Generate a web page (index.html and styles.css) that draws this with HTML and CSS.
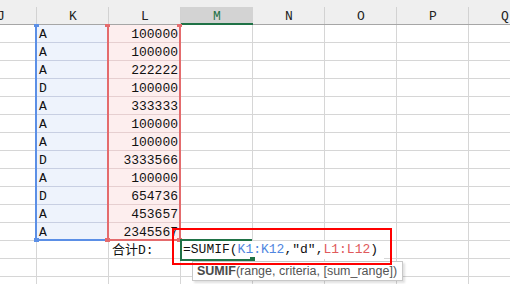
FILE: index.html
```html
<!DOCTYPE html>
<html>
<head>
<meta charset="utf-8">
<link rel="stylesheet" href="styles.css">
</head>
<body>
<div class="sheet">
  <div class="grid">
    <div class="h">J</div><div class="h">K</div><div class="h">L</div><div class="h hs">M</div><div class="h">N</div><div class="h">O</div><div class="h">P</div><div class="h">Q</div>

    <div class="c"></div><div class="c k">A</div><div class="c l">100000</div><div class="c"></div><div class="c"></div><div class="c"></div><div class="c"></div><div class="c"></div>
    <div class="c"></div><div class="c k">A</div><div class="c l">100000</div><div class="c"></div><div class="c"></div><div class="c"></div><div class="c"></div><div class="c"></div>
    <div class="c"></div><div class="c k">A</div><div class="c l">222222</div><div class="c"></div><div class="c"></div><div class="c"></div><div class="c"></div><div class="c"></div>
    <div class="c"></div><div class="c k">D</div><div class="c l">100000</div><div class="c"></div><div class="c"></div><div class="c"></div><div class="c"></div><div class="c"></div>
    <div class="c"></div><div class="c k">A</div><div class="c l">333333</div><div class="c"></div><div class="c"></div><div class="c"></div><div class="c"></div><div class="c"></div>
    <div class="c"></div><div class="c k">A</div><div class="c l">100000</div><div class="c"></div><div class="c"></div><div class="c"></div><div class="c"></div><div class="c"></div>
    <div class="c"></div><div class="c k">A</div><div class="c l">100000</div><div class="c"></div><div class="c"></div><div class="c"></div><div class="c"></div><div class="c"></div>
    <div class="c"></div><div class="c k">D</div><div class="c l">3333566</div><div class="c"></div><div class="c"></div><div class="c"></div><div class="c"></div><div class="c"></div>
    <div class="c"></div><div class="c k">A</div><div class="c l">100000</div><div class="c"></div><div class="c"></div><div class="c"></div><div class="c"></div><div class="c"></div>
    <div class="c"></div><div class="c k">D</div><div class="c l">654736</div><div class="c"></div><div class="c"></div><div class="c"></div><div class="c"></div><div class="c"></div>
    <div class="c"></div><div class="c k">A</div><div class="c l">453657</div><div class="c"></div><div class="c"></div><div class="c"></div><div class="c"></div><div class="c"></div>
    <div class="c"></div><div class="c k">A</div><div class="c l">2345567</div><div class="c"></div><div class="c"></div><div class="c"></div><div class="c"></div><div class="c"></div>

    <div class="c"></div><div class="c"></div><div class="c total">合计D:</div><div class="c"></div><div class="c"></div><div class="c"></div><div class="c"></div><div class="c"></div>
    <div class="c"></div><div class="c"></div><div class="c"></div><div class="c"></div><div class="c"></div><div class="c"></div><div class="c"></div><div class="c"></div>
    <div class="c"></div><div class="c"></div><div class="c"></div><div class="c"></div><div class="c"></div><div class="c"></div><div class="c"></div><div class="c"></div>
  </div>

  <div class="range range-k"></div>
  <div class="range range-l"></div>
  <div class="handle hb ht1"></div>
  <div class="handle hb hb1"></div>
  <div class="handle hr ht2"></div>
  <div class="handle hr ht3"></div>
  <div class="handle hr hb2"></div>
  <div class="handle hr hb3"></div>

  <div class="editor"></div>
  <div class="formula">=SUMIF(<span class="ref-k">K1:K12</span>,"d",<span class="ref-l">L1:L12</span>)</div>
  <div class="handle hg"></div>

  <div class="tip"><b>SUMIF</b>(range, criteria, [sum_range])</div>
  <div class="redbox"></div>
</div>
</body>
</html>
```

FILE: styles.css
```css
* { box-sizing: border-box; }
html, body { margin: 0; padding: 0; background: #fff; overflow: hidden; }

.sheet {
  position: relative;
  width: 510px;
  height: 284px;
  overflow: hidden;
}

.grid {
  display: grid;
  grid-template-columns: repeat(8, 72px);
  grid-template-rows: 25px repeat(15, 18px);
  margin-left: -35px;
  width: 576px;
  font-family: "Liberation Mono", "Noto Sans CJK SC", monospace;
  font-size: 13px;
  color: #111;
}

.h {
  background: linear-gradient(#d2d2d2, #d2d2d2) right bottom / 1px 17px no-repeat, #efefef;
  border-bottom: 1px solid #a6a6a6;
  text-align: center;
  line-height: 15px;
  padding-top: 9px;
  color: #222;
}
.h.hs {
  background: linear-gradient(to bottom, #efefef 7px, #d3d3d3 7px);
  border-bottom: 2px solid #1f7246;
  color: #1f7246;
}

.c {
  border-right: 1px solid #d6d6d6;
  border-bottom: 1px solid #d6d6d6;
  line-height: 16px;
  padding: 2px 2px 0 1px;
  white-space: nowrap;
}
.c.k {
  background: #eef3fc;
  border-bottom-color: #c8cfe2;
  padding-left: 2px;
}
.c.l {
  background: #fdeeee;
  border-bottom-color: #e6cfd0;
  text-align: right;
}
.c.total {
  padding-left: 3px;
  overflow: visible;
}

.range { position: absolute; top: 25px; height: 216px; }
.range-k {
  left: 35px;
  width: 73px;
  border-left: 2px solid #5b8fe6;
  border-bottom: 2px solid #5b8fe6;
}
.range-l {
  left: 107px;
  width: 74px;
  border: 2px solid #e46b6d;
  border-top: none;
}

.handle { position: absolute; width: 5px; height: 4px; }
.hb { background: #5b8fe6; }
.hr { background: #e46b6d; }
.ht1 { left: 34px; top: 24px; height: 3px; }
.hb1 { left: 34px; top: 238px; }
.ht2 { left: 105px; top: 24px; height: 3px; }
.ht3 { left: 177px; top: 24px; height: 3px; }
.hb2 { left: 105px; top: 238px; }
.hb3 { left: 177px; top: 238px; }
.hg { background: #1f7246; left: 250px; top: 257px; width: 5px; height: 4px; }

.editor {
  position: absolute;
  left: 180px;
  top: 239px;
  width: 72px;
  height: 22px;
  border-top: 2px solid #1f7246;
  border-left: 2px solid #1f7246;
  border-bottom: 2px solid #1f7246;
}

.formula {
  position: absolute;
  left: 182px;
  top: 241px;
  height: 18px;
  padding: 0 6px 0 1px;
  background: #fff;
  font-family: "Liberation Mono", monospace;
  font-size: 13px;
  line-height: 17px;
  color: #111;
  white-space: nowrap;
}
.ref-k { color: #4f86e0; }
.ref-l { color: #e05a5c; }

.tip {
  position: absolute;
  left: 192px;
  top: 261px;
  width: 211px;
  height: 20px;
  background: #fff;
  border: 1px solid #c8c8c8;
  box-shadow: 2px 2px 2px rgba(0, 0, 0, 0.12);
  font-family: "Liberation Sans", Arial, sans-serif;
  font-size: 12.5px;
  line-height: 18px;
  padding-left: 4px;
  color: #555;
  white-space: nowrap;
}
.tip b { color: #4a4a4a; }

.redbox {
  position: absolute;
  left: 172px;
  top: 228px;
  width: 220px;
  height: 37px;
  border: 2px solid #ff0000;
}
```
